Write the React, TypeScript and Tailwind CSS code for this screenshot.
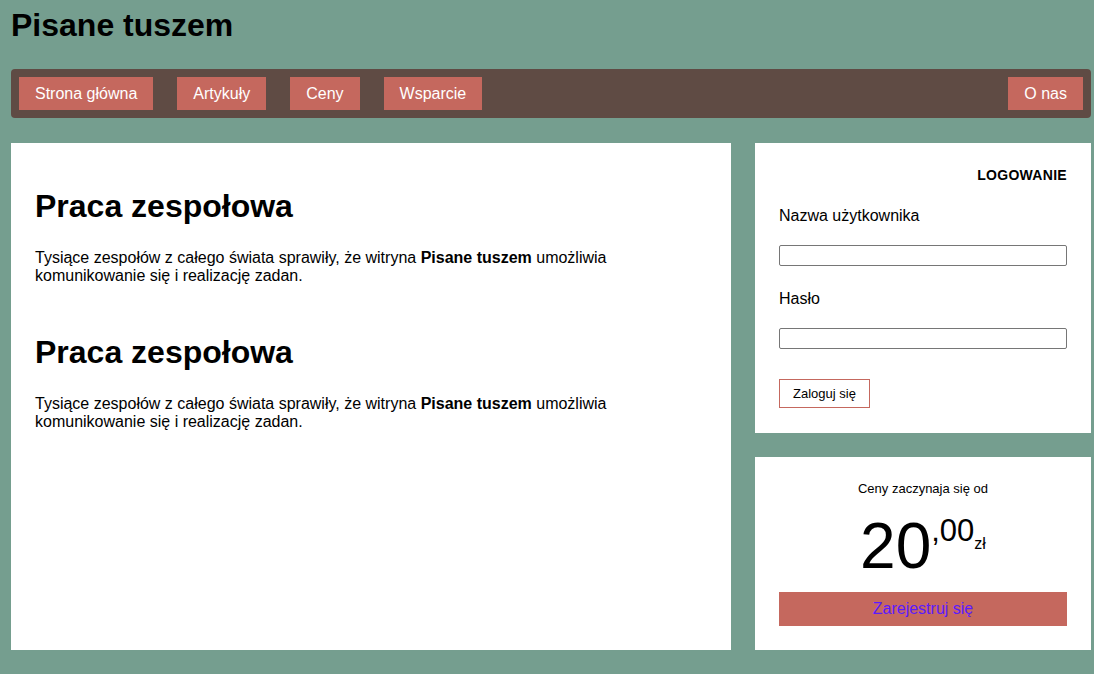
import React from 'react';

const navItems = ['Strona główna', 'Artykuły', 'Ceny', 'Wsparcie'];

function Article() {
  return (
    <section>
      <h2 className="text-[32px] font-bold leading-[36px] mb-[25px]">Praca zespołowa</h2>
      <p className="text-[16px] leading-[18px]">
        Tysiące zespołów z całego świata sprawiły, że witryna <b>Pisane tuszem</b> umożliwia
        komunikowanie się i realizację zadan.
      </p>
    </section>
  );
}

export default function App() {
  return (
    <div
      className="min-h-[674px] bg-[#759e8f] px-[11px] pt-[7px] text-black"
      style={{ fontFamily: '"Liberation Sans", Arial, sans-serif' }}
    >
      <div className="w-[1080px]">
        <h1 className="text-[32px] font-bold leading-[36px]">Pisane tuszem</h1>

        {/* Navigation */}
        <nav className="mt-[26px] flex items-center gap-6 rounded-[4px] bg-[#5f4b44] p-2">
          {navItems.map((item) => (
            <a key={item} className="bg-[#c5685e] px-4 py-2 text-[16px] leading-[17px] text-white">
              {item}
            </a>
          ))}
          <a className="ml-auto bg-[#c5685e] px-4 py-2 text-[16px] leading-[17px] text-white">O nas</a>
        </nav>

        <div className="mt-[25px] flex gap-6">
          {/* Main content */}
          <main className="flex w-[720px] flex-col gap-[49px] bg-white px-6 pt-[45px]">
            <Article />
            <Article />
          </main>

          {/* Sidebar */}
          <aside className="flex w-[336px] flex-col gap-6">
            <div className="bg-white px-6 pt-6 pb-[25px]">
              <h3 className="text-right text-[14px] font-bold leading-[16px] tracking-[0.3px]">LOGOWANIE</h3>
              <label className="mt-[24px] block text-[16px] leading-[18px]">Nazwa użytkownika</label>
              <input
                type="text"
                className="mt-[20px] block h-[21px] w-full rounded-[2px] border border-[#767676]"
              />
              <label className="mt-[24px] block text-[16px] leading-[18px]">Hasło</label>
              <input
                type="password"
                className="mt-[20px] block h-[21px] w-full rounded-[2px] border border-[#767676]"
              />
              <button className="mt-[30px] block border border-[#c5685e] bg-white px-[13px] py-[6px] text-[13px] leading-[15px]">
                Zaloguj się
              </button>
            </div>

            <div className="bg-white p-6 text-center">
              <p className="text-[13px] leading-[15px]">Ceny zaczynaja się od</p>
              <div className="mt-[14px] flex items-start justify-center leading-none">
                <span className="text-[64px] leading-[72px]">20</span>
                <span className="mt-[5px] text-[31px] leading-[32px]">,00</span>
                <span className="mt-[25px] text-[16px] leading-[18px]">zł</span>
              </div>
              <a className="mt-[10px] block bg-[#c5685e] py-2 text-[16px] leading-[18px] text-[#5b1aff]">
                Zarejestruj się
              </a>
            </div>
          </aside>
        </div>
      </div>
    </div>
  );
}
